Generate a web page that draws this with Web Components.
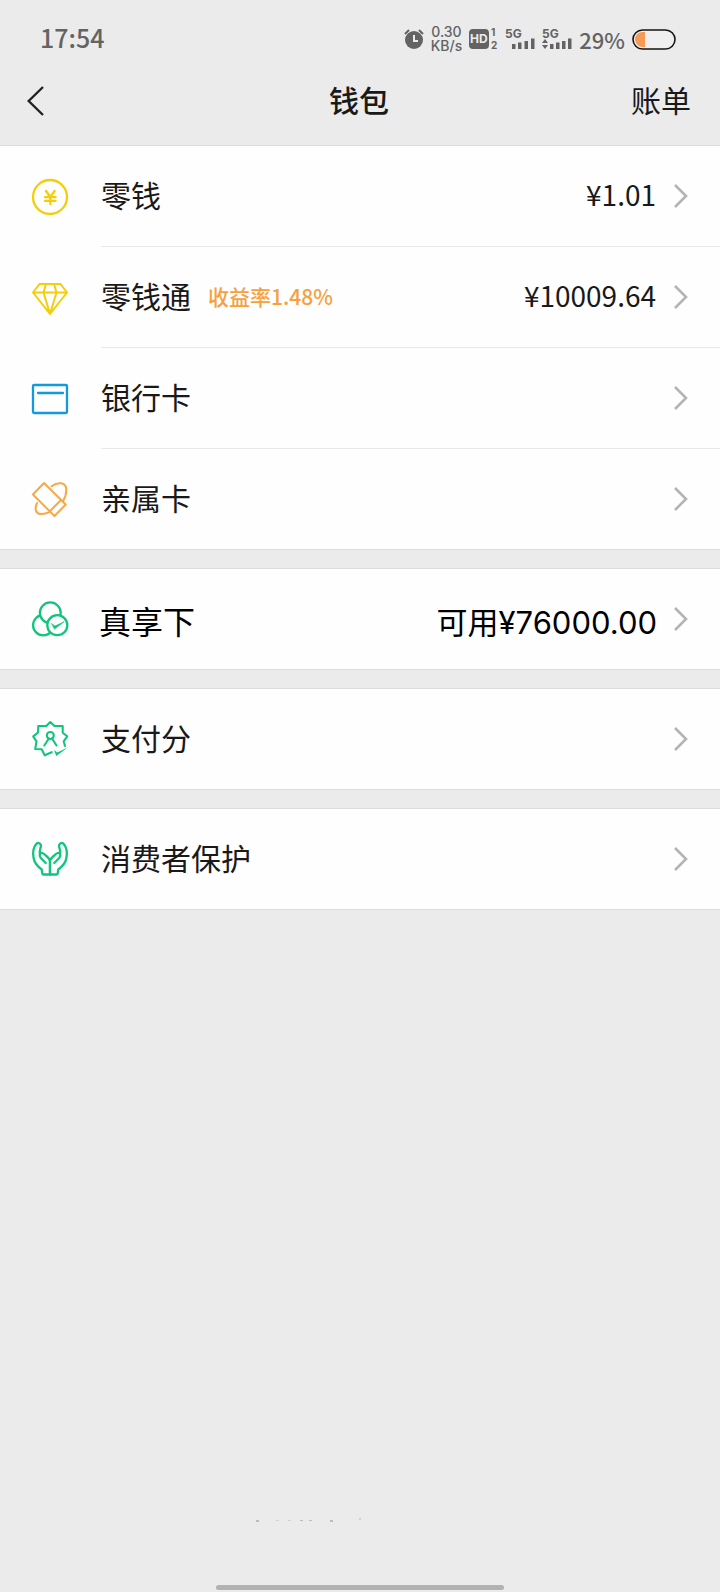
<!DOCTYPE html>
<html lang="zh-CN">
<head>
<meta charset="utf-8">
<meta name="viewport" content="width=device-width, initial-scale=1">
<title>钱包</title>
<style>
    body {
        margin: 0;
        background: #ebebeb;
        color: #191919;
        font-family: "Noto Sans CJK SC", sans-serif;
        font-size: 30px;
        line-height: 40px;
    }
</style>
</head>
<body>
<wallet-page>
    <status-bar slot="top"></status-bar>
    <nav-bar slot="top">
        钱包
        <a slot="action" href="#bills">账单</a>
    </nav-bar>

    <wallet-group>
        <wallet-row icon="coin">零钱<span slot="value">¥1.01</span></wallet-row>
        <wallet-row icon="diamond">零钱通<span slot="tag">收益率1.48%</span><span slot="value">¥10009.64</span></wallet-row>
        <wallet-row icon="card">银行卡</wallet-row>
        <wallet-row icon="family">亲属卡</wallet-row>
    </wallet-group>
    <wallet-group>
        <wallet-row icon="rings" large>真享下<span slot="value">可用¥76000.00</span></wallet-row>
    </wallet-group>
    <wallet-group>
        <wallet-row icon="score">支付分</wallet-row>
    </wallet-group>
    <wallet-group>
        <wallet-row icon="hands">消费者保护</wallet-row>
    </wallet-group>

    <home-indicator slot="bottom"></home-indicator>
</wallet-page>

<script>
// attach an open shadow root and fill it from a template
function render(host, html) {
    const template = document.createElement('template');
    template.innerHTML = html;
    host.attachShadow({ mode: 'open' });
    host.shadowRoot.appendChild(template.content.cloneNode(true));
}

const icons = {
    coin: `<g stroke="#f4ce08" stroke-width="2.3">
        <circle cx="18" cy="18" r="17"/>
        <path d="M14 12l4.300 6 4.300-6M18.300 18v7M13 18.200h10.600M13 21.800h10.600"/></g>`,
    diamond: `<g stroke="#f4ce08" stroke-width="2">
        <path d="M7.500 4h21L35 12.500 18 34 1 12.500zM1 12.500h34M14 4l-2.500 8.500L18 34l6.500-21.500L22 4"/></g>`,
    card: `<g stroke="#1499dc" stroke-width="2.3">
        <rect x="1" y="4" width="34" height="28" rx="1.200"/>
        <path d="M6 12h25"/></g>`,
    family: `<g stroke="#f7a948" stroke-width="2">
        <path d="M12 2L.900 13.500l21.600 21.500L33.700 23.500zM17.700 30.300l11.600-11.500"/>
        <path d="M19.500 5.300C26 .500 34 1 34.300 8.500c.100 4-1 8-3.500 12M5 22C2.500 28 3.300 32.700 9 33c3 .100 6-.800 9-2.200"/></g>`,
    rings: `<g stroke="#10c67d" stroke-width="2.3">
        <circle cx="11.300" cy="24.200" r="10.200"/>
        <circle cx="18.300" cy="11.800" r="10.400" fill="#fefefe"/>
        <circle cx="25.300" cy="24.200" r="10" fill="#fefefe"/></g>
        <path d="M19.700 22.700l3.300 2.300 9-4.200-9.300 7.200z" fill="#10c67d" stroke="#10c67d" stroke-width=".600"/>`,
    score: `<g stroke="#10c67d" stroke-width="2.1">
        <path d="M33 25l-1.300-4.700 3.500-5-4.500-3.600V5H22.500L18.300 1l-4 4H6.300l-.300 6.700-4.800 3.600 3.300 5L3.200 28l6.500.200 3 6 7-3"/>
        <circle cx="18.300" cy="14.500" r="3.500"/>
        <path d="M12.300 24.500l4.500-7M24.500 24.500l-4.500-7"/></g>
        <path d="M22 29l3.300 2.600L36 26.300 24.300 35z" fill="#10c67d"/>`,
    hands: `<g stroke="#10c67d" stroke-width="2.3">
        <path id="hand" d="M18 33.500h-6.300q-1.300 0-1.500-1.500L9.700 28.500C5 25 2.300 21 1.600 17 .500 11 1.500 6.500 4 3.300 6 .800 9.200 2.500 8.900 5.300 8.600 7.500 7 10.500 8 13.500M13.700 22L8.800 17C6.500 14 8 11.500 10.300 12c1.500.400 2.500 1.500 4 3 2 1.700 3.700 3.500 3.700 5.500v13"/>
        <use href="#hand" transform="matrix(-1 0 0 1 36 0)"/></g>`
};

class WalletPage extends HTMLElement {
    constructor() {
        super();
        render(this, `
            <style>
                :host { display: flex; flex-direction: column; min-height: 100vh; }
                main { display: grid; gap: 18px; flex: 1; align-content: start; }
            </style>
            <slot name="top"></slot>
            <main><slot></slot></main>
            <slot name="bottom"></slot>
        `);
    }
}

class StatusBar extends HTMLElement {
    constructor() {
        super();
        render(this, `
            <style>
                :host {
                    display: flex;
                    justify-content: space-between;
                    align-items: center;
                    height: 76px;
                    padding: 0 44px 0 40px;
                    color: #636363;
                }
                time { font-size: 25px; font-weight: 500; padding-bottom: 2px; }
                .icons { display: flex; align-items: center; gap: 7px; padding-top: 2px; }
                svg { display: block; fill: currentColor; overflow: visible; }
                text { font: bold 12px Inter, sans-serif; }
                .sim { font-size: 10px; }
                .speed {
                    display: grid;
                    justify-items: center;
                    font: 500 14px/14px Inter, sans-serif;
                }
                .percent { font-size: 22px; font-weight: 500; }
            </style>
            <time>17:54</time>
            <div class="icons">
                <svg width="20" height="22" viewBox="0 0 20 22" role="img" aria-label="闹钟">
                    <circle cx="10" cy="12" r="9"/>
                    <path d="M1 6l4-4M19 6l-4-4" stroke="currentColor" stroke-width="2"/>
                    <path d="M10 7v6h4" stroke="#ebebeb" stroke-width="2" fill="none"/>
                </svg>
                <div class="speed"><span>0.30</span><span>KB/s</span></div>
                <svg width="29" height="22" viewBox="0 0 29 22">
                    <rect x="0" y="1" width="20" height="20" rx="4"/>
                    <text x="1" y="15" fill="#ebebeb">HD</text>
                    <text class="sim" x="22" y="8">1</text>
                    <text class="sim" x="22" y="21">2</text>
                </svg>
                <svg width="30" height="22" viewBox="0 0 30 22">
                    <text x="0" y="10">5G</text>
                    <path d="M7 16h3.500v5H7zM13 14.500h3.500V21H13zM19.500 13H23v8h-3.500zM26 10.500h3.500V21H26z"/>
                </svg>
                <svg width="30" height="22" viewBox="0 0 30 22">
                    <text x="0" y="10">5G</text>
                    <path d="M3 11l3 4H0zM3 21l3-4H0zM8 16h3.500v5H8zM14 14.500h3.500V21H14zM20 13h3.500v8H20zM26 10.500h3.500V21H26z"/>
                </svg>
                <span class="percent">29%</span>
                <svg width="44" height="22" viewBox="0 0 44 22" role="img" aria-label="电量">
                    <rect x="1" y="2" width="42" height="19" rx="9.500" fill="#efefef" stroke="#151515" stroke-width="1.600"/>
                    <path d="M13 4v15h-2.500a7.500 7.500 0 0 1 0-15z" fill="#f79a55"/>
                </svg>
            </div>
        `);
    }
}

class NavBar extends HTMLElement {
    constructor() {
        super();
        render(this, `
            <style>
                :host {
                    display: grid;
                    grid-template-columns: 1fr auto 1fr;
                    align-items: center;
                    padding: 3px 29px 22px 27px;
                }
                button { justify-self: start; padding: 0; border: 0; background: none; }
                svg { display: block; }
                h1 { margin: 0; padding-bottom: 4px; font-size: 30px; font-weight: 500; }
                ::slotted(a) { justify-self: end; padding-bottom: 4px; color: inherit; text-decoration: none; }
            </style>
            <button type="button" aria-label="返回">
                <svg width="18" height="32" viewBox="0 0 18 32" fill="none" stroke="#222" stroke-width="2.400">
                    <path d="M16 2L1.700 16 16 30"/>
                </svg>
            </button>
            <h1><slot></slot></h1>
            <slot name="action"></slot>
        `);
    }
}

class WalletGroup extends HTMLElement {
    constructor() {
        super();
        render(this, `
            <style>
                :host {
                    display: block;
                    background: #fefefe;
                    border: solid #dcdcdc;
                    border-width: 1px 0;
                }
            </style>
            <slot></slot>
        `);
    }
}

class WalletRow extends HTMLElement {
    constructor() {
        super();
        render(this, `
            <style>
                :host { display: block; }
                a {
                    display: flex;
                    align-items: center;
                    padding-left: 32px;
                    color: inherit;
                    text-decoration: none;
                }
                svg { display: block; flex: none; fill: none; }
                .icon { margin-right: 33px; stroke-linejoin: round; stroke-linecap: round; overflow: visible; }
                .body {
                    display: flex;
                    flex: 1;
                    align-items: center;
                    height: 100px;
                    padding-right: 32px;
                }
                :host(:not(:last-child)) .body { border-bottom: 1px solid #e9e9e9; }
                .label, .value { padding-bottom: 5px; }
                ::slotted([slot="tag"]) {
                    margin-left: 17px;
                    padding-bottom: 3px;
                    color: #f7a040;
                    font-size: 21px;
                    font-weight: 500;
                }
                .value { margin: 0 18px 0 auto; font-size: 28px; }
                /* bigger type that sits a little lower in the row */
                :host([large]) { color: #000; font-family: Inter, "Noto Sans CJK SC", sans-serif; font-size: 32px; }
                :host([large]) .icon { margin-right: 31px; }
                :host([large]) .label, :host([large]) .value { padding: 8px 0 0; }
                :host([large]) .value { margin-right: 17px; font-size: 31px; }
            </style>
            <a href="#${this.getAttribute('icon')}">
                <svg class="icon" width="36" height="36" viewBox="0 0 36 36">${icons[this.getAttribute('icon')]}</svg>
                <span class="body">
                    <span class="label"><slot></slot></span>
                    <slot name="tag"></slot>
                    <span class="value"><slot name="value"></slot></span>
                    <svg width="14" height="24" viewBox="0 0 14 24" stroke="#b4b4b4" stroke-width="2.600">
                        <path d="M1 1l11 11L1 23"/>
                    </svg>
                </span>
            </a>
        `);
    }
}

class HomeIndicator extends HTMLElement {
    constructor() {
        super();
        render(this, `
            <style>
                :host { display: grid; gap: 60px; justify-items: center; padding-bottom: 2px; }
                i { width: 40%; height: 5px; border-radius: 3px; background: #b2b2b2; }
                svg { display: block; }
            </style>
            <svg width="208" height="8" viewBox="256 1517 208 8" fill="#bcbcbc">
                <path d="M256 1520h3v2h-3zM300 1520h3v1h-3zM309 1520h3v1h-3zM330 1520h3v2h-3z"/>
                <path d="M276 1520h3v1h-3zM288 1520h3v1h-3zM359 1518h2v2h-2z" fill="#d2d2d2"/>
            </svg>
            <i></i>
        `);
    }
}

window.customElements.define('wallet-page', WalletPage);
window.customElements.define('status-bar', StatusBar);
window.customElements.define('nav-bar', NavBar);
window.customElements.define('wallet-group', WalletGroup);
window.customElements.define('wallet-row', WalletRow);
window.customElements.define('home-indicator', HomeIndicator);
</script>
</body>
</html>
